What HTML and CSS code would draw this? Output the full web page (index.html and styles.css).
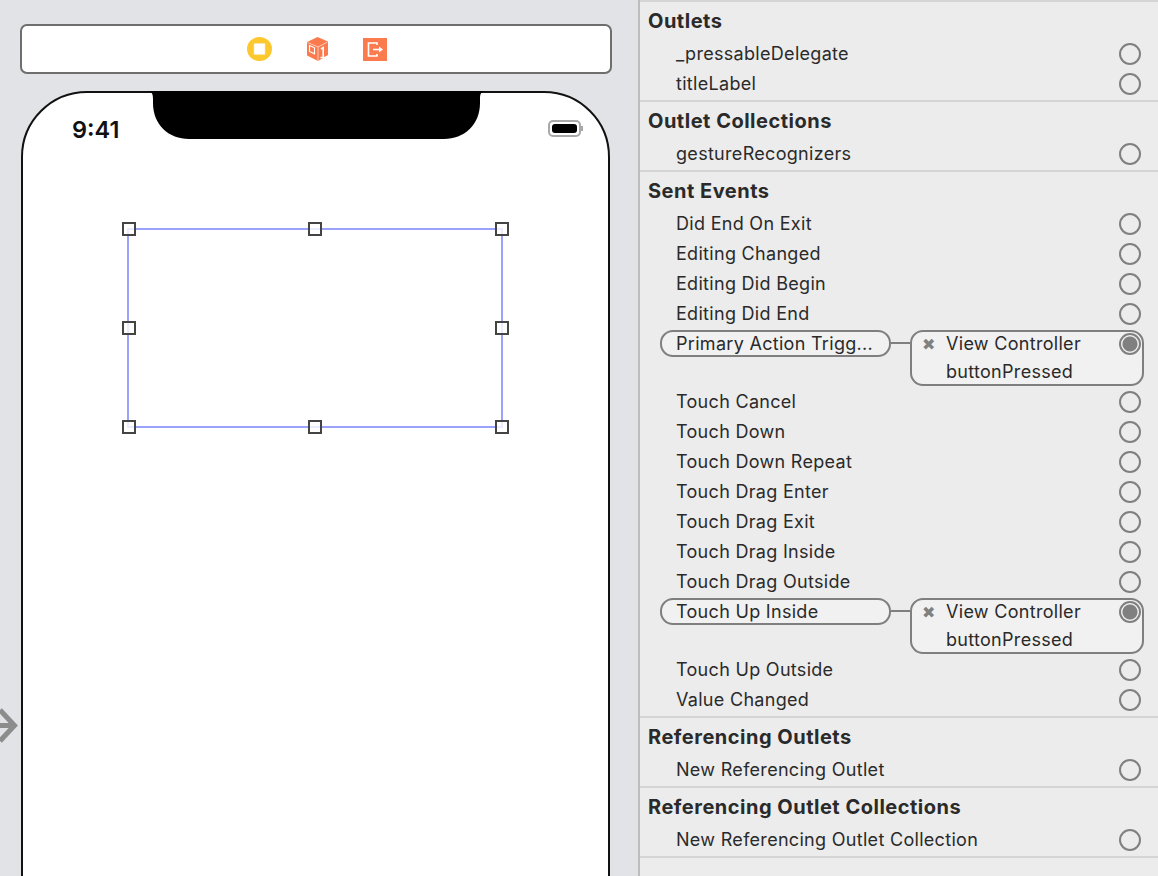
FILE: index.html
```html
<!DOCTYPE html>
<html lang="en">
  <head>
    <meta charset="UTF-8" />
    <meta name="viewport" content="width=device-width, initial-scale=1.0" />
    <title>Connections Inspector</title>
    <link rel="stylesheet" href="styles.css">
  </head>
  <body>
    <div class="canvas">
      <div class="scene-bar">
        <svg class="scene-icon" width="25" height="24" viewBox="0 0 25 24">
          <ellipse cx="12.5" cy="12" rx="12.5" ry="12" fill="#fdc72e" />
          <rect x="7" y="6.5" width="11" height="11" fill="#fff" stroke="#fee9ad" stroke-width="1.2" stroke-dasharray="1 1" />
        </svg>
        <svg class="scene-icon" width="23" height="24" viewBox="0 0 23 24">
          <path d="M11.5 0 L22 4.5 V18 L12 24 L1 18.5 V5 Z" fill="#fb7b4f" />
          <path d="M1.5 5.5 L12 10 L21.5 5" fill="none" stroke="#ffc9b5" stroke-width="1" />
          <path d="M12 10 V24" stroke="#ffc9b5" stroke-width="1" />
          <path d="M3.5 8.5 L8.5 10.8 V16.8 L3.5 14.5 Z" fill="none" stroke="#fff" stroke-width="1.1" />
          <path d="M15 12 L17.2 10.6 V20 M14.5 20.5 H19.5" fill="none" stroke="#fff" stroke-width="1.6" />
        </svg>
        <svg class="scene-icon" width="24" height="23" viewBox="0 0 24 23">
          <rect width="24" height="23" fill="#fb7b4f" />
          <path d="M14 7 V5 H5.5 V18 H14 V16" fill="none" stroke="#fff" stroke-width="1.6" />
          <path d="M10 11.5 H17" stroke="#fff" stroke-width="1.6" />
          <path d="M16 8.5 L20 11.5 L16 14.5 Z" fill="#fff" />
        </svg>
      </div>

      <div class="phone">
        <div class="status-bar">
          <span class="clock">9:41</span>
          <div class="battery"><div class="battery-fill"></div></div>
          <div class="battery-cap"></div>
        </div>
        <svg class="notch" width="339" height="48" viewBox="0 0 339 48">
          <path d="M0 0 H339 C334 0 333 3 333 8 V12 C333 34 317 48 297 48 H42 C22 48 6 34 6 12 V8 C6 3 5 0 0 0 Z" fill="#000" />
        </svg>
      </div>

      <div class="selection">
        <span class="handle h-tl"></span>
        <span class="handle h-tc"></span>
        <span class="handle h-tr"></span>
        <span class="handle h-ml"></span>
        <span class="handle h-mr"></span>
        <span class="handle h-bl"></span>
        <span class="handle h-bc"></span>
        <span class="handle h-br"></span>
      </div>

      <svg class="entry-arrow" width="20" height="38" viewBox="0 0 20 38">
        <path d="M0 18.5 H13 M0 3 L14.5 18.5 L0 34" fill="none" stroke="#8c8c8c" stroke-width="5" />
      </svg>
    </div>

    <div class="inspector">
      <section class="group">
        <h3>Outlets</h3>
        <div class="row"><span>_pressableDelegate</span><i class="radio"></i></div>
        <div class="row"><span>titleLabel</span><i class="radio"></i></div>
      </section>
      <section class="group">
        <h3>Outlet Collections</h3>
        <div class="row"><span>gestureRecognizers</span><i class="radio"></i></div>
      </section>
      <section class="group">
        <h3>Sent Events</h3>
        <div class="row"><span>Did End On Exit</span><i class="radio"></i></div>
        <div class="row"><span>Editing Changed</span><i class="radio"></i></div>
        <div class="row"><span>Editing Did Begin</span><i class="radio"></i></div>
        <div class="row"><span>Editing Did End</span><i class="radio"></i></div>
        <div class="row-linked">
          <div class="pill">Primary Action Trigg...</div>
          <div class="link-line"></div>
          <div class="target">
            <span class="remove">✖</span>
            <div class="target-text"><div>View Controller</div><div>buttonPressed</div></div>
            <i class="radio on"></i>
          </div>
        </div>
        <div class="row"><span>Touch Cancel</span><i class="radio"></i></div>
        <div class="row"><span>Touch Down</span><i class="radio"></i></div>
        <div class="row"><span>Touch Down Repeat</span><i class="radio"></i></div>
        <div class="row"><span>Touch Drag Enter</span><i class="radio"></i></div>
        <div class="row"><span>Touch Drag Exit</span><i class="radio"></i></div>
        <div class="row"><span>Touch Drag Inside</span><i class="radio"></i></div>
        <div class="row"><span>Touch Drag Outside</span><i class="radio"></i></div>
        <div class="row-linked">
          <div class="pill">Touch Up Inside</div>
          <div class="link-line"></div>
          <div class="target">
            <span class="remove">✖</span>
            <div class="target-text"><div>View Controller</div><div>buttonPressed</div></div>
            <i class="radio on"></i>
          </div>
        </div>
        <div class="row"><span>Touch Up Outside</span><i class="radio"></i></div>
        <div class="row"><span>Value Changed</span><i class="radio"></i></div>
      </section>
      <section class="group">
        <h3>Referencing Outlets</h3>
        <div class="row"><span>New Referencing Outlet</span><i class="radio"></i></div>
      </section>
      <section class="group">
        <h3>Referencing Outlet Collections</h3>
        <div class="row"><span>New Referencing Outlet Collection</span><i class="radio"></i></div>
      </section>
    </div>
  </body>
</html>
```

FILE: styles.css
```css
html,
body {
  margin: 0;
  height: 876px;
  overflow: hidden;
}

body {
  display: flex;
  font-family: Inter, "Noto Sans", sans-serif;
  color: #2a2a2a;
  background-color: #ececec;
}

/* left side: storyboard canvas */
.canvas {
  position: relative;
  box-sizing: border-box;
  width: 640px;
  height: 876px;
  padding: 24px 0 0 20px;
  overflow: hidden;
  background-color: #e1e3e6;
  border-right: 2px solid #bdbdbd;
}

.scene-bar {
  box-sizing: border-box;
  display: flex;
  align-items: center;
  justify-content: center;
  gap: 34px;
  width: 592px;
  height: 50px;
  padding-left: 2px;
  background: #fff;
  border: 2px solid #6e6e6e;
  border-radius: 7px;
}

.scene-icon {
  display: block;
}

.phone {
  position: relative;
  box-sizing: border-box;
  width: 589px;
  height: 860px;
  margin: 17px 0 0 1px;
  background: #fff;
  border: 2px solid #111;
  border-radius: 66px;
}

.notch {
  position: absolute;
  top: -2px;
  left: 124px;
}

.status-bar {
  display: flex;
  align-items: center;
  height: 26px;
  padding: 23px 0 0 49px;
}

.clock {
  width: 476px;
  font-size: 23.5px;
  font-weight: 600;
  color: #111;
}

.battery {
  box-sizing: border-box;
  width: 33px;
  height: 17px;
  margin-top: -2px;
  padding: 2px;
  border: 2px solid #a9a9a9;
  border-radius: 5px;
}

.battery-fill {
  height: 100%;
  background: #000;
  border-radius: 3px;
}

.battery-cap {
  width: 2px;
  height: 5px;
  margin-top: -2px;
  background: #a9a9a9;
}

.selection {
  position: absolute;
  box-sizing: border-box;
  left: 127px;
  top: 228px;
  width: 376px;
  height: 200px;
  border: 2px solid #9aa2fd;
}

.handle {
  position: absolute;
  box-sizing: border-box;
  width: 14px;
  height: 14px;
  background: rgba(255, 255, 255, 0.8);
  border: 2px solid #444;
}

.h-tl { left: -7px; top: -8px; }
.h-tc { left: 179px; top: -8px; }
.h-tr { right: -8px; top: -8px; }
.h-ml { left: -7px; top: 91px; }
.h-mr { right: -8px; top: 91px; }
.h-bl { left: -7px; bottom: -8px; }
.h-bc { left: 179px; bottom: -8px; }
.h-br { right: -8px; bottom: -8px; }

.entry-arrow {
  position: absolute;
  left: 0;
  top: 707px;
}

/* right side: connections list */
.inspector {
  flex: 1;
  border-top: 2px solid #d4d4d4;
}

.group {
  padding-bottom: 1px;
  border-bottom: 2px solid #d4d4d4;
}

.group h3 {
  margin: 0;
  padding: 0 0 0 8px;
  height: 37px;
  line-height: 38px;
  font-size: 20px;
  font-weight: 700;
  letter-spacing: 0.5px;
}

.row {
  display: flex;
  align-items: center;
  justify-content: space-between;
  height: 30px;
  padding: 0 17px 0 36px;
  font-size: 18px;
  letter-spacing: 0.3px;
}

.row span {
  margin-bottom: 2px;
}

.row-linked {
  display: flex;
  align-items: flex-start;
  height: 55px;
  padding: 1px 0 2px 20px;
  font-size: 18px;
  letter-spacing: 0.3px;
}

.pill {
  box-sizing: border-box;
  width: 231px;
  height: 27px;
  padding-left: 14px;
  line-height: 24px;
  background: #f1f1f1;
  border: 2px solid #7f7f7f;
  border-radius: 13px;
}

.link-line {
  width: 19px;
  height: 2px;
  margin-top: 12px;
  background: #7f7f7f;
}

.target {
  box-sizing: border-box;
  display: flex;
  width: 234px;
  height: 56px;
  background: #f1f1f1;
  border: 2px solid #7f7f7f;
  border-radius: 13px;
}

.remove {
  width: 34px;
  font-size: 16px;
  line-height: 24px;
  text-align: center;
  color: #808080;
}

.target-text {
  flex: 1;
  line-height: 28px;
  margin-top: -2px;
}

.radio {
  box-sizing: border-box;
  display: block;
  flex: none;
  width: 22px;
  height: 22px;
  border: 2px solid #808080;
  border-radius: 50%;
}

.radio.on {
  margin: 1px 1px 0 0;
  background: radial-gradient(circle, #808080 0 7px, #f1f1f1 8px);
}
```
